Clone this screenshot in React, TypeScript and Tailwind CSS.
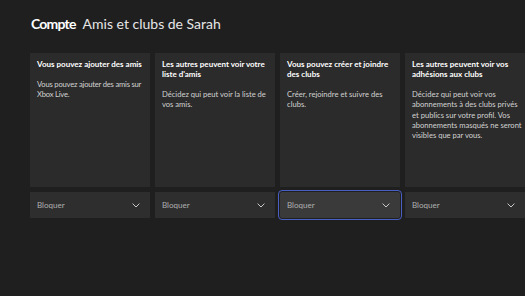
import React from "react";

const cards = [
  {
    h: "Vous pouvez ajouter des amis",
    b: "Vous pouvez ajouter des amis sur Xbox Live.",
    t: "tracking-[-0.2px]",
  },
  {
    h: "Les autres peuvent voir votre liste d'amis",
    b: "Décidez qui peut voir la liste de vos amis.",
    t: "",
  },
  {
    h: "Vous pouvez créer et joindre des clubs",
    b: "Créer, rejoindre et suivre des clubs.",
    t: "",
  },
  {
    h: "Les autres peuvent voir vos adhésions aux clubs",
    b: "Décidez qui peut voir vos abonnements à des clubs privés et publics sur votre profil. Vos abonnements masqués ne seront visibles que par vous.",
    t: "",
  },
];

function Chevron() {
  return (
    <svg width="8" height="5" viewBox="0 0 8 5" fill="none">
      <path d="M0.6 0.6 L4 4 L7.4 0.6" stroke="#c8c8c8" strokeWidth="1" />
    </svg>
  );
}

export default function App() {
  return (
    <div
      className="w-[525px] h-[296px] bg-[#1f1f1f] overflow-hidden"
      style={{ fontFamily: 'Lato, "Noto Sans", sans-serif' }}
    >
      <div className="pl-[31px] pt-[14px] h-[53px] flex items-start text-[14px] leading-[20px] text-[#e6e6e6]">
        <span className="font-bold text-white tracking-[-0.8px]">Compte</span>
        <span className="ml-[7px]">Amis et clubs de Sarah</span>
      </div>
      <div className="pl-[30px] flex gap-[5px] w-[560px]">
        {cards.map((c, i) => (
          <div key={i} className="w-[120px] shrink-0 flex flex-col gap-[5px]">
            <div className="h-[134px] bg-[#2b2b2b] pl-[7px] pr-[3px] pt-[6px]">
              <div className="text-[8px] leading-[10px] font-bold text-white">{c.h}</div>
              <div className={"mt-[10px] text-[7.6px] leading-[10.3px] text-[#d2d2d2] " + c.t}>{c.b}</div>
            </div>
            <div
              className={
                "h-[26px] flex items-center justify-between px-[7px] " +
                (i === 2
                  ? "bg-[#3a3a3a] outline outline-[1.5px] outline-offset-[1px] outline-[#4a5fc4] rounded-[2px]"
                  : "bg-[#2e2e2e]")
              }
            >
              <span className="text-[8px] text-[#b0b0b0]">Bloquer</span>
              <span className="mr-[3px]">
                <Chevron />
              </span>
            </div>
          </div>
        ))}
      </div>
    </div>
  );
}
